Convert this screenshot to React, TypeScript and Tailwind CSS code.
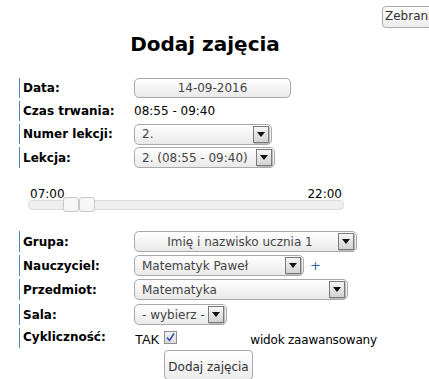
import React from "react";

const font = { fontFamily: '"DejaVu Sans", Verdana, sans-serif' };

function Arrow() {
  return (
    <div className="mr-[2px] flex h-[17px] w-[16px] shrink-0 items-center justify-center border border-[#7a7a7a] bg-gradient-to-b from-[#f6f6f6] to-[#d2d2d2] shadow-[1px_1px_0_#bbb]">
      <svg width="8" height="5" viewBox="0 0 8 5">
        <path d="M0 0 H8 L4 5 Z" fill="#111" />
      </svg>
    </div>
  );
}

function Select({ w, text, center }: { w: number; text: string; center?: boolean }) {
  return (
    <div
      className="flex h-[21px] items-center rounded-[5px] border border-[#a9a9a9] bg-gradient-to-b from-white to-[#e9e9e9] text-[12px] text-[#444]"
      style={{ width: w }}
    >
      <div className={`flex-1 truncate pl-[7px] ${center ? "text-center" : ""}`}>{text}</div>
      <Arrow />
    </div>
  );
}

function Row({ label, children, h = 20 }: { label: string; children?: React.ReactNode; h?: number }) {
  return (
    <div className="flex items-center" style={{ height: h }}>
      <div className="flex h-full w-[115px] items-center border-l border-[#4a86b8] pl-[3px] text-[12px] font-bold text-black">
        {label}
      </div>
      <div className="flex items-center">{children}</div>
    </div>
  );
}

export default function App() {
  return (
    <div className="relative h-[379px] w-[429px] overflow-hidden bg-white text-black" style={font}>
      <div className="flex justify-end pt-[6px]">
        <div className="-mr-[20px] flex h-[22px] w-[67px] items-end rounded-[4px] border border-[#aaa] bg-gradient-to-b from-white to-[#ececec] pb-[2px] pl-[2px] text-[12px] text-[#333]">
          Zebrania
        </div>
      </div>
      <div className="w-[410px] pt-[3px] text-center text-[20px] font-bold leading-[26px]">Dodaj zajęcia</div>

      <div className="ml-[19px] mt-[21px] flex flex-col gap-[3px]">
        <Row label="Data:">
          <div className="flex h-[20px] w-[157px] items-center justify-center rounded-[5px] border border-[#a9a9a9] bg-gradient-to-b from-white to-[#e9e9e9] text-[12px] text-[#444]">
            14-09-2016
          </div>
        </Row>
        <Row label="Czas trwania:">
          <span className="text-[12px]">08:55 - 09:40</span>
        </Row>
        <Row label="Numer lekcji:">
          <Select w={138} text="2." />
        </Row>
        <Row label="Lekcja:" h={21}>
          <Select w={141} text="2. (08:55 - 09:40)" />
        </Row>
      </div>

      <div className="ml-[28px] mt-[19px] w-[316px]">
        <div className="flex justify-between px-[2px] text-[12px] leading-[14px]">
          <span>07:00</span>
          <span>22:00</span>
        </div>
        <div className="relative mt-[-1px] h-[10px] rounded-[4px] border border-[#dcdcdc] bg-[#eeeeee]">
          <div className="absolute left-[34px] top-[-4px] h-[15px] w-[16px] rounded-[3px] border border-[#c8c8c8] bg-[#f6f6f6]" />
          <div className="absolute left-[50px] top-[-1px] h-[10px] w-[1px] bg-[#3b6fb0]" />
          <div className="absolute left-[50px] top-[-4px] h-[15px] w-[16px] rounded-[3px] border border-[#c8c8c8] bg-[#f6f6f6]" />
        </div>
      </div>

      <div className="ml-[19px] mt-[21px] flex flex-col gap-[3px]">
        <Row label="Grupa:" h={21}>
          <Select w={223} text="Imię i nazwisko ucznia 1" center />
        </Row>
        <Row label="Nauczyciel:" h={21}>
          <Select w={170} text="Matematyk Paweł" />
          <span className="ml-[6px] text-[13px] text-[#2d5fa8]">+</span>
        </Row>
        <Row label="Przedmiot:" h={21}>
          <Select w={214} text="Matematyka" />
        </Row>
        <div className="mt-[1px]">
          <Row label="Sala:" h={21}>
            <Select w={93} text="- wybierz -" />
          </Row>
        </div>
        <div className="flex h-[20px]">
          <div className="flex h-full w-[115px] items-start border-l border-[#4a86b8] pl-[3px] text-[12px] font-bold">
            Cykliczność:
          </div>
          <div className="flex items-center pt-[4px]">
            <span className="ml-[1px]" style={{ fontFamily: '"Liberation Sans", Arial, sans-serif', fontSize: 13 }}>
              TAK
            </span>
            <div className="ml-[5px] mt-[-6px] flex h-[13px] w-[13px] items-center justify-center border border-[#8f8f8f] bg-gradient-to-b from-[#f0f0f0] to-[#dcdcdc]">
              <svg width="9" height="9" viewBox="0 0 9 9">
                <path d="M1 4.5 L3.5 7.5 L8 0.5" stroke="#3a4fa8" strokeWidth="1.6" fill="none" />
              </svg>
            </div>
            <span className="ml-[73px] text-[12px] tracking-[-0.2px]">widok zaawansowany</span>
          </div>
        </div>
      </div>

      <div className="ml-[164px] mt-[2px] flex h-[30px] w-[89px] items-end justify-center rounded-[4px] border border-[#aaa] bg-gradient-to-b from-white to-[#ececec] pb-[3px] text-[12px] text-[#333]">
        Dodaj zajęcia
      </div>
    </div>
  );
}
